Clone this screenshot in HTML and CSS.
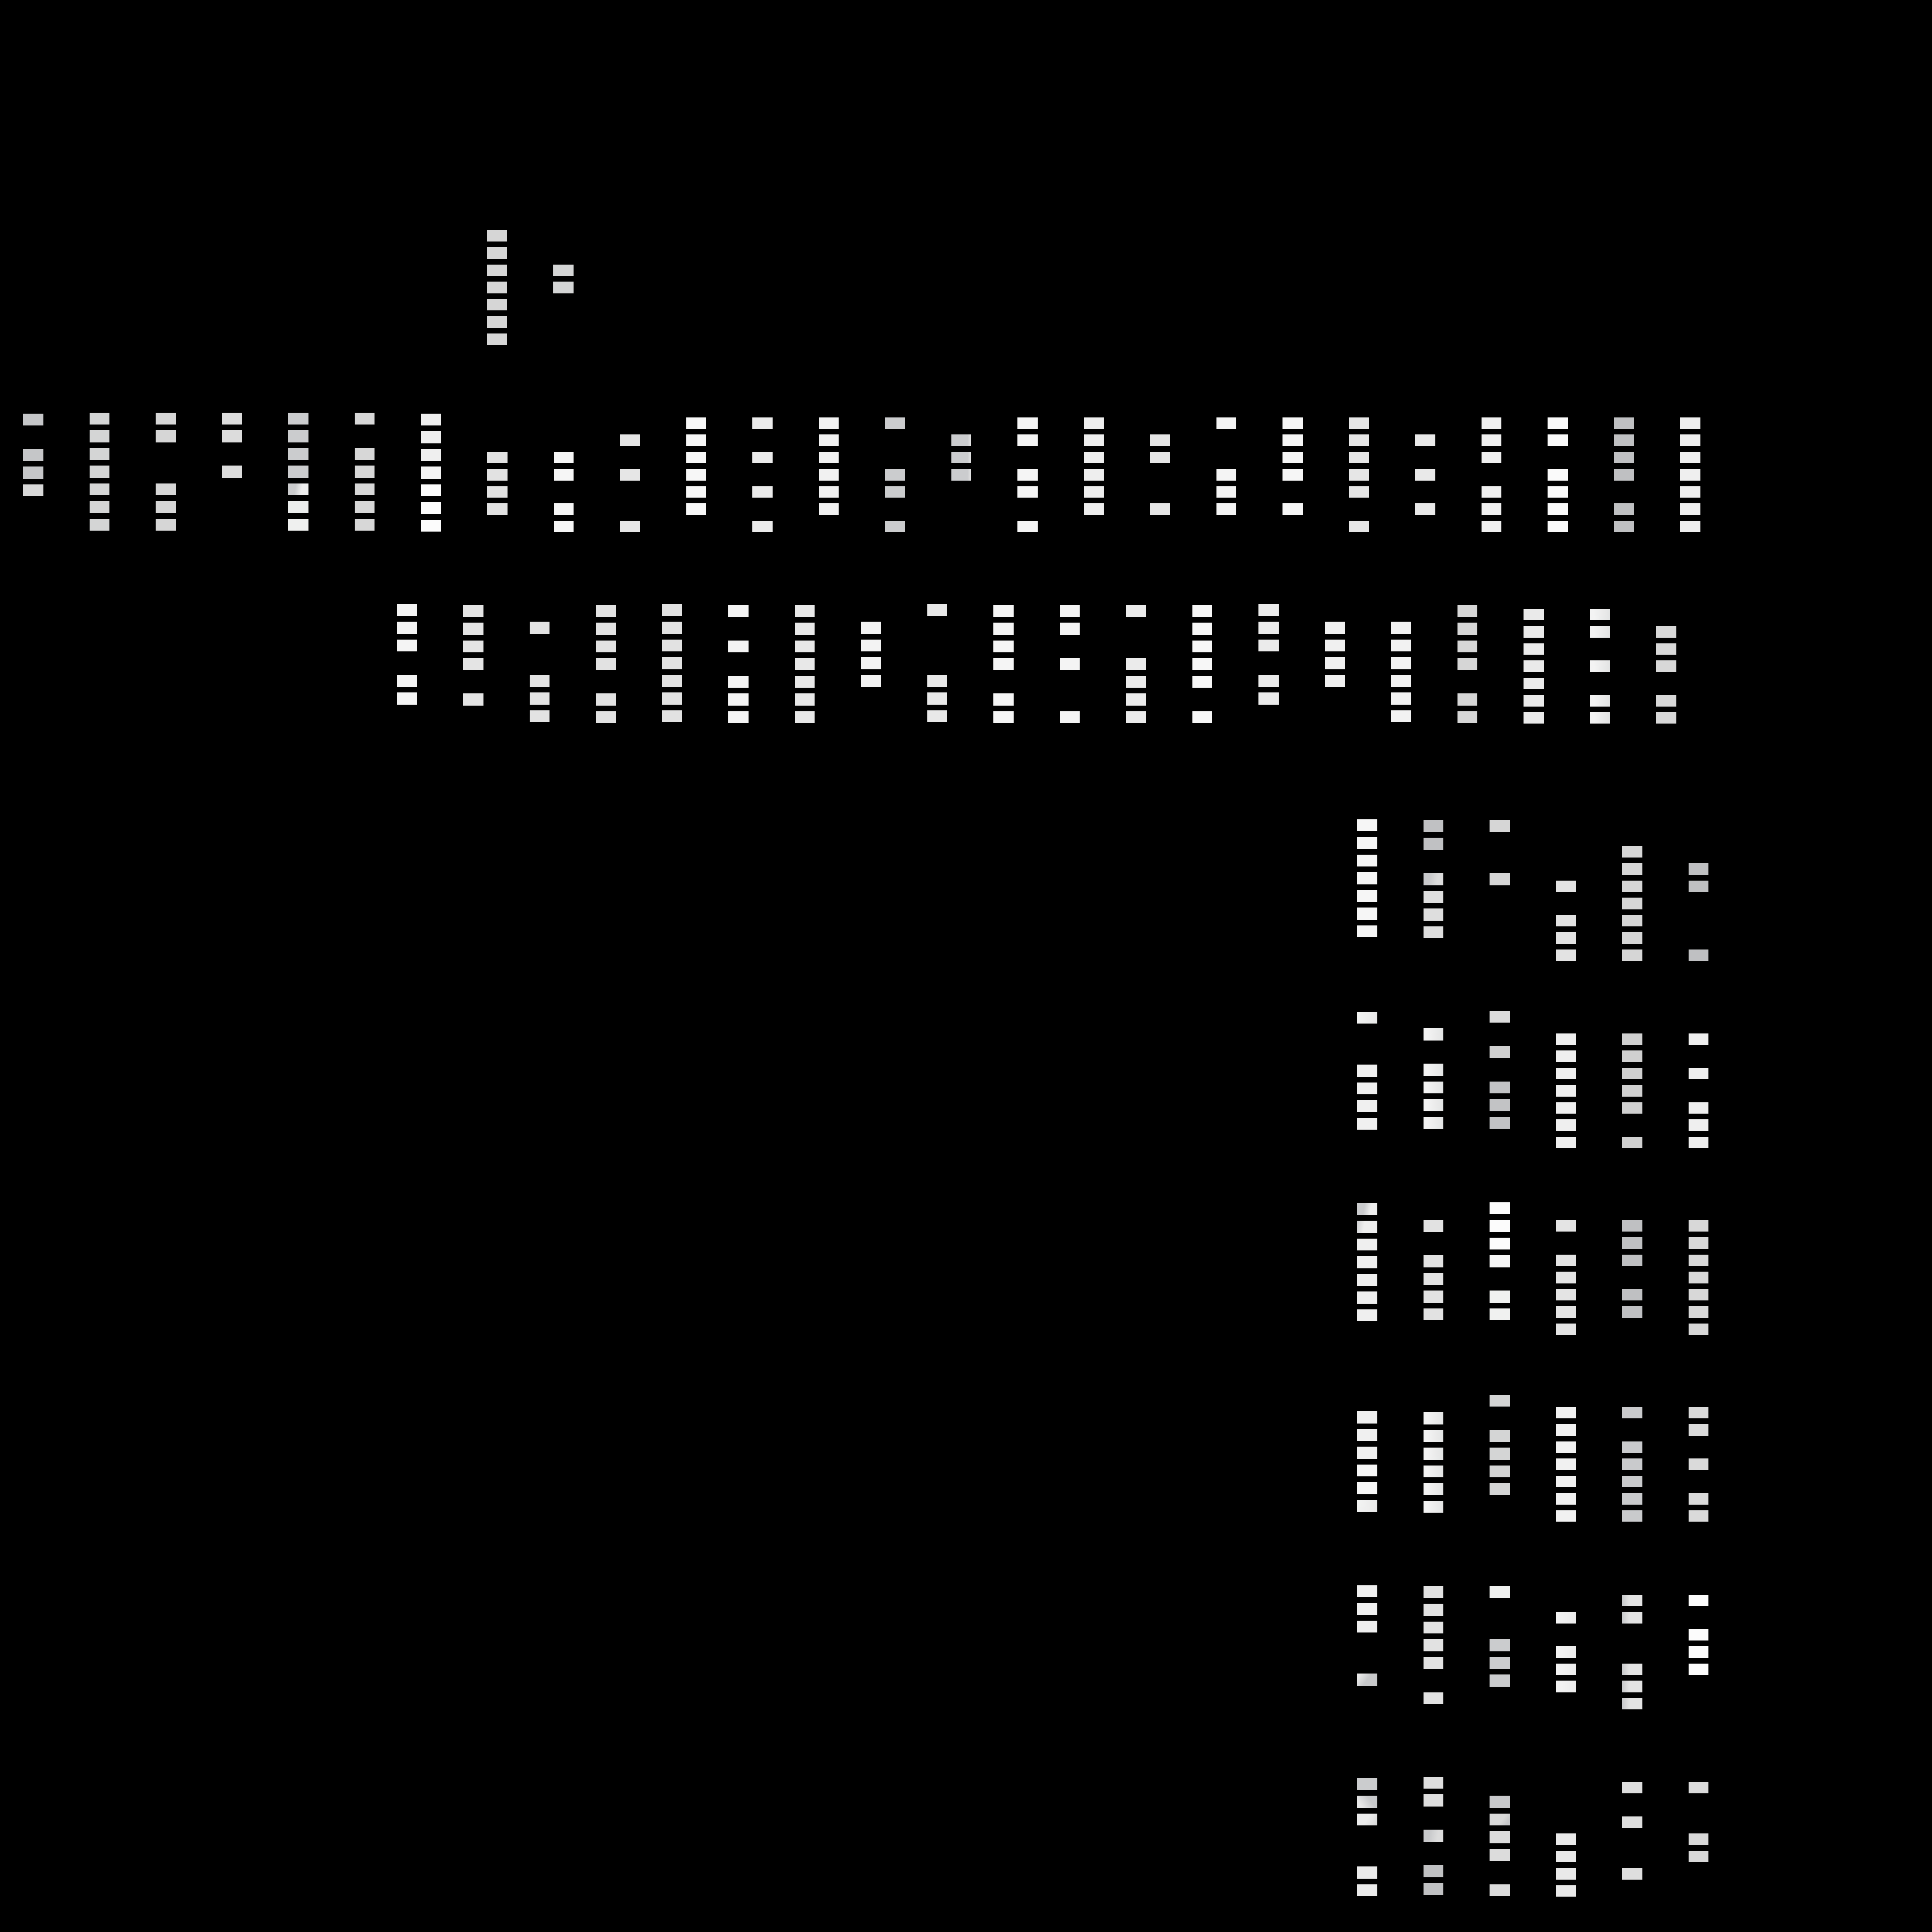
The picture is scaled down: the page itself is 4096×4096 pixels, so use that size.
FILE: index.html
```html
<!DOCTYPE html>
<html lang="en">
<head>
<meta charset="utf-8">
<title>Dot matrix</title>
<link rel="stylesheet" href="styles.css">
</head>
<body>
<main class="page">

<section class="band band-top">
<div class="col short t-d6"><b></b><b></b><b></b><b></b><b></b><b></b><b></b></div>
<div class="col short t-d4"><i></i><i></i><b></b><b></b><i></i><i></i><i></i></div>
</section>

<section class="band band-wide">
<div class="col tall y2 t-c5"><b></b><i></i><b></b><b></b><b class="soft"></b><i></i><i></i></div>
<div class="col tall t-d4"><b></b><b></b><b></b><b></b><b></b><b></b><b></b></div>
<div class="col tall t-d6"><b></b><b></b><i></i><i></i><b></b><b></b><b></b></div>
<div class="col tall t-dc"><b></b><b></b><i></i><b></b><i></i><i></i><i></i></div>
<div class="col tall t-cb"><b></b><b></b><b></b><b></b><b class="sweep"></b><b class="lit-eb"></b><b class="lit-ef"></b></div>
<div class="col tall t-d7"><b></b><i></i><b></b><b></b><b></b><b></b><b></b></div>
<div class="col tall y2 t-ef"><b></b><b></b><b></b><b class="lit-f5"></b><b class="lit-fc"></b><b class="lit-fc"></b><b class="lit-fc"></b></div>
<div class="col short y10 t-e2"><i></i><i></i><b></b><b></b><b></b><b></b><i></i></div>
<div class="col short y10 t-f6"><i></i><i></i><b></b><b></b><i></i><b></b><b></b></div>
<div class="col short y10 t-e6"><i></i><b></b><i></i><b></b><i></i><i></i><b></b></div>
<div class="col short y10 t-f7"><b></b><b></b><b></b><b></b><b></b><b></b><i></i></div>
<div class="col short y10 t-eb"><b></b><i></i><b></b><i></i><b></b><i></i><b></b></div>
<div class="col short y10 t-f1"><b></b><b></b><b></b><b></b><b></b><b></b><i></i></div>
<div class="col short y10 t-cb"><b></b><i></i><i></i><b></b><b></b><i></i><b></b></div>
<div class="col short y10 t-edge"><i></i><b></b><b></b><b></b><i></i><i></i><i></i></div>
<div class="col short y10 t-f5"><b></b><b></b><i></i><b></b><b></b><i></i><b></b></div>
<div class="col short y10 t-ee"><b></b><b></b><b></b><b></b><b></b><b></b><i></i></div>
<div class="col short y10 t-e6"><i></i><b></b><b></b><i></i><i></i><b></b><i></i></div>
<div class="col short y10 t-f4"><b></b><i></i><i></i><b></b><b></b><b></b><i></i></div>
<div class="col short y10 t-f6"><b></b><b></b><b></b><b></b><i></i><b></b><i></i></div>
<div class="col short y10 t-e6"><b></b><b></b><b></b><b></b><b></b><i></i><b></b></div>
<div class="col short y10 t-e9"><i></i><b></b><i></i><b></b><i></i><b></b><i></i></div>
<div class="col short y10 t-f0"><b></b><b></b><b></b><i></i><b></b><b></b><b></b></div>
<div class="col short y10 t-fa"><b></b><b></b><i></i><b></b><b></b><b></b><b></b></div>
<div class="col short y10 t-bf"><b></b><b></b><b></b><b></b><i></i><b></b><b></b></div>
<div class="col short y10 t-ef"><b></b><b></b><b></b><b></b><b></b><b></b><b></b></div>
</section>

<section class="band band-mid">
<div class="col tall t-f4"><b></b><b></b><b></b><i></i><b></b><b></b><i></i></div>
<div class="col tall y2 t-e4"><b></b><b></b><b></b><b></b><i></i><b></b><i></i></div>
<div class="col tall t-e3"><i></i><b></b><i></i><i></i><b></b><b></b><b></b></div>
<div class="col tall y2 t-e2"><b></b><b></b><b></b><b></b><i></i><b></b><b></b></div>
<div class="col tall t-e2"><b></b><b></b><b></b><b></b><b></b><b></b><b></b></div>
<div class="col tall y2 t-f4"><b></b><i></i><b></b><i></i><b></b><b></b><b></b></div>
<div class="col tall y2 t-e8"><b></b><b></b><b></b><b></b><b></b><b></b><b></b></div>
<div class="col tall t-f3"><i></i><b></b><b></b><b></b><b></b><i></i><i></i></div>
<div class="col tall t-e8"><b></b><i></i><i></i><i></i><b></b><b></b><b></b></div>
<div class="col tall y2 t-f5"><b></b><b></b><b></b><b></b><i></i><b></b><b></b></div>
<div class="col tall y2 t-f4"><b></b><b></b><i></i><b></b><i></i><i></i><b></b></div>
<div class="col tall y2 t-eb"><b></b><i></i><i></i><b></b><b></b><b></b><b></b></div>
<div class="col tall y2 t-f7"><b></b><b></b><b></b><b></b><b></b><i></i><b></b></div>
<div class="col tall t-eb"><b></b><b></b><b></b><i></i><b></b><b></b><i></i></div>
<div class="col tall t-f0"><i></i><b></b><b></b><b></b><b></b><i></i><i></i></div>
<div class="col tall t-f2"><i></i><b></b><b></b><b></b><b></b><b></b><b></b></div>
<div class="col tall y2 t-d6"><b></b><b></b><b></b><b></b><i></i><b></b><b></b></div>
<div class="col short y10 t-ea"><b></b><b></b><b></b><b></b><b></b><b></b><b></b></div>
<div class="col short y10 t-fade"><b></b><b></b><i></i><b></b><i></i><b></b><b></b></div>
<div class="col short y10 t-d8"><i></i><b></b><b></b><b></b><i></i><b></b><b></b></div>
</section>

<section class="band band-side">
<div class="col tall t-f6"><b></b><b></b><b></b><b></b><b></b><b></b><b></b></div>
<div class="col tall y2 t-de"><b class="lit-c0"></b><b class="lit-c0"></b><i></i><b class="sweep-c"></b><b></b><b></b><b></b></div>
<div class="col tall y2 t-d6"><b></b><i></i><i></i><b></b><i></i><i></i><i></i></div>
<div class="col short y57 t-e3"><i></i><i></i><b></b><i></i><b></b><b></b><b></b></div>
<div class="col short y57 t-d6"><b></b><b></b><b></b><b></b><b></b><b></b><b></b></div>
<div class="col short y57 t-bf"><i></i><b></b><b></b><i></i><i></i><i></i><b></b></div>
</section>

<section class="band band-side">
<div class="col tall y2 t-f0"><b class="fade-soft"></b><i></i><i></i><b></b><b></b><b></b><b></b></div>
<div class="col tall t-fade"><i></i><b></b><i></i><b></b><b></b><b></b><b></b></div>
<div class="col tall t-c2"><b class="lit-dc"></b><i></i><b class="lit-d0"></b><i></i><b></b><b></b><b></b></div>
<div class="col short y48 t-ef"><b></b><b></b><b></b><b></b><b></b><b></b><b></b></div>
<div class="col short y48 t-d0"><b></b><b></b><b></b><b></b><b></b><i></i><b></b></div>
<div class="col short y48 t-ef"><b></b><i></i><b></b><i></i><b></b><b></b><b></b></div>
</section>

<section class="band band-side">
<div class="col tall y2 t-ef"><b class="sweep"></b><b class="sweep-b"></b><b></b><b></b><b></b><b></b><b></b></div>
<div class="col tall t-e2"><i></i><b></b><i></i><b></b><b></b><b></b><b></b></div>
<div class="col tall t-fc"><b></b><b></b><b></b><b class="lit-f8"></b><i></i><b class="lit-f0"></b><b class="lit-f0"></b></div>
<div class="col short y38 t-e4"><b></b><i></i><b></b><b></b><b></b><b></b><b></b></div>
<div class="col short y38 t-bf"><b></b><b></b><b></b><i></i><b></b><b></b><i></i></div>
<div class="col short y38 t-d8"><b></b><b></b><b></b><b></b><b></b><b></b><b></b></div>
</section>

<section class="band band-side">
<div class="col tall t-f0"><i></i><b></b><b></b><b></b><b class="lit-f7"></b><b class="lit-f7"></b><b class="fade-soft"></b></div>
<div class="col tall y2 t-fade"><i></i><b></b><b></b><b></b><b></b><b></b><b></b></div>
<div class="col tall y2 t-d4"><b></b><i></i><b></b><b></b><b></b><b></b><i></i></div>
<div class="col short y28 t-f1"><b></b><b></b><b></b><b></b><b></b><b></b><b></b></div>
<div class="col short y28 t-c9"><b></b><i></i><b></b><b></b><b></b><b></b><b></b></div>
<div class="col short y28 t-da"><b></b><b></b><i></i><b></b><i></i><b></b><b></b></div>
</section>

<section class="band band-side">
<div class="col tall t-ef"><b></b><b></b><b></b><i></i><i></i><b class="sweep-d"></b><i></i></div>
<div class="col tall y2 t-e2"><b></b><b></b><b></b><b></b><b></b><i></i><b></b></div>
<div class="col tall y2 t-cb"><b class="lit-f0"></b><i></i><i></i><b></b><b></b><b></b><i></i></div>
<div class="col short y20 t-light"><i></i><b></b><i></i><b></b><b></b><b></b><i></i></div>
<div class="col short y20 t-notch"><b></b><b></b><i></i><i></i><b></b><b></b><b></b></div>
<div class="col short y20 t-fc"><b></b><i></i><b></b><b></b><b></b><i></i><i></i></div>
</section>

<section class="band band-side">
<div class="col tall y3 t-eb"><b class="lit-cb"></b><b class="sweep-e"></b><b class="sweep-f"></b><i></i><i></i><b></b><b></b></div>
<div class="col tall t-de"><b></b><b></b><i></i><b class="sweep-c"></b><i></i><b class="lit-c0"></b><b class="lit-c0"></b></div>
<div class="col tall y3 t-dc"><i></i><b class="lit-c8"></b><b class="sweep-g"></b><b></b><b></b><i></i><b></b></div>
<div class="col short y11 t-e9"><i></i><i></i><i></i><b></b><b></b><b></b><b></b></div>
<div class="col short y11 t-de"><b></b><i></i><b></b><i></i><i></i><b></b><i></i></div>
<div class="col short y11 t-d8"><b class="lit-db"></b><i></i><i></i><b></b><b></b><i></i><i></i></div>
</section>

</main>
</body>
</html>
```
FILE: styles.css
```css
html, body {
  margin: 0;
  background: #000;
}

.page {
  width: 4096px;
  height: 4096px;
  padding-top: 488px;
  box-sizing: border-box;
  overflow: hidden;
  background: #000;
}

.band {
  display: flex;
  align-items: flex-start;
  gap: 98.02px;
  box-sizing: border-box;
}

.band-top { height: 387px; padding-left: 1032.6px; }
.band-wide { height: 406px; padding-left: 49.4px; }
.band-mid { height: 456px; padding-left: 841.5px; }
.band-side { height: 406px; padding-left: 2877px; }

.col {
  display: flex;
  flex-direction: column;
  flex: none;
  width: 42.5px;
}

.col b, .col i { display: block; }
.col b { background: var(--tone); }

.tall { gap: 12.2px; }
.tall b, .tall i { height: 25.3px; }
.short { gap: 12px; }
.short b, .short i { height: 24.45px; }

.y2 { margin-top: 2px; }
.y3 { margin-top: 3px; }
.y10 { margin-top: 10px; }
.y11 { margin-top: 11px; }
.y20 { margin-top: 20px; }
.y28 { margin-top: 28px; }
.y38 { margin-top: 38px; }
.y48 { margin-top: 48px; }
.y57 { margin-top: 57px; }

.t-bf { --tone: #bfc0c2; }
.t-c2 { --tone: #c2c3c5; }
.t-c5 { --tone: #c5c6c8; }
.t-c9 { --tone: #c9cacc; }
.t-cb { --tone: #cbccce; }
.t-d0 { --tone: #d0d0d0; }
.t-d4 { --tone: #d4d5d5; }
.t-d6 { --tone: #d6d6d6; }
.t-d7 { --tone: #d7d7d7; }
.t-d8 { --tone: #d8d8d8; }
.t-da { --tone: #dadada; }
.t-dc { --tone: #dcdcdc; }
.t-de { --tone: #dedede; }
.t-e2 { --tone: #e2e2e2; }
.t-e3 { --tone: #e3e3e3; }
.t-e4 { --tone: #e4e4e4; }
.t-e6 { --tone: #e6e6e6; }
.t-e8 { --tone: #e8e8e8; }
.t-e9 { --tone: #e9e9e9; }
.t-ea { --tone: #eaeaea; }
.t-eb { --tone: #ebebeb; }
.t-ee { --tone: #eeeeee; }
.t-ef { --tone: #efefef; }
.t-f0 { --tone: #f0f0f0; }
.t-f1 { --tone: #f1f1f1; }
.t-f2 { --tone: #f2f2f2; }
.t-f3 { --tone: #f3f3f3; }
.t-f4 { --tone: #f4f4f4; }
.t-f5 { --tone: #f5f5f5; }
.t-f6 { --tone: #f6f6f6; }
.t-f7 { --tone: #f7f7f7; }
.t-fa { --tone: #fafafa; }
.t-fc { --tone: #fcfcfc; }
.t-edge { --tone: linear-gradient(90deg, #cbccce 82%, #e6e6e6 100%); }
.t-fade { --tone: linear-gradient(90deg, #f3f3f3 20%, #e3e4e4 100%); }
.t-light { --tone: linear-gradient(90deg, #f4f4f4, #ececec); }
.t-notch { --tone: linear-gradient(90deg, #c8c9cb 0%, #e3e3e3 35%); }

.col .soft { background: #d8d8d8; }
.col .lit-c0 { background: #c0c1c3; }
.col .lit-c8 { background: #c8c9cb; }
.col .lit-cb { background: #cbccce; }
.col .lit-d0 { background: #d0d0d0; }
.col .lit-db { background: #dbdbdb; }
.col .lit-dc { background: #dcdcdc; }
.col .lit-eb { background: #ebedec; }
.col .lit-ef { background: #eff0ef; }
.col .lit-f0 { background: #f0f1f0; }
.col .lit-f5 { background: #f5f5f5; }
.col .lit-f7 { background: #f7f7f7; }
.col .lit-f8 { background: #f8f8f8; }
.col .lit-fc { background: #fcfcfc; }

.col .sweep { background: linear-gradient(100deg, #cbccce 35%, #eeeeee 65%); }
.col .sweep-b { background: linear-gradient(100deg, #cfd0d2 0%, #eeeeee 35%); }
.col .sweep-c { background: linear-gradient(100deg, #c8c9cb 30%, #dcdcdc 70%); }
.col .sweep-d { background: linear-gradient(125deg, #e8e8e8 15%, #c8c9cb 50%); }
.col .sweep-e { background: linear-gradient(55deg, #e8e8e8 20%, #c8c9cb 65%); }
.col .sweep-f { background: linear-gradient(125deg, #ececec 50%, #d8d8d8 100%); }
.col .sweep-g { background: linear-gradient(125deg, #d8d8d8 60%, #c6c7c9 85%); }
.col .fade-soft { background: linear-gradient(100deg, #f3f4f3, #e8e8e8); }
```
